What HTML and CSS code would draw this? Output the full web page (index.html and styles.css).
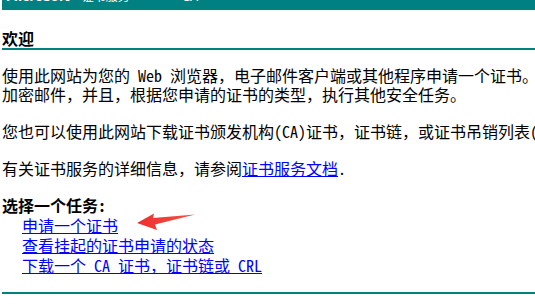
FILE: index.html
```html
<!DOCTYPE html>
<html lang="zh-CN">
<head>
    <meta charset="UTF-8">
    <title>Microsoft 证书服务</title>
    <link rel="stylesheet" href="styles.css">
</head>
<body>
    <div class="banner">
        <div class="banner-text">
            <span class="brand">Microsoft</span><span class="service">证书服务</span><span class="dash">--</span><span class="ca">CA</span>
        </div>
    </div>

    <h1 class="welcome">欢迎</h1>

    <p>使用此网站为您的 Web 浏览器，电子邮件客户端或其他程序申请一个证书。<br>加密邮件，并且，根据您申请的证书的类型，执行其他安全任务。</p>

    <p>您也可以使用此网站下载证书颁发机构(CA)证书，证书链，或证书吊销列表(CRL)，或查看挂起的申请的状态。</p>

    <p>有关证书服务的详细信息，请参阅<a href="#">证书服务文档</a>.</p>

    <div class="tasks">
        <b class="tasks-title">选择一个任务:</b>
        <a href="#">申请一个证书</a>
        <a href="#">查看挂起的证书申请的状态</a>
        <a href="#">下载一个 CA 证书，证书链或 CRL</a>
    </div>

    <div class="rule"></div>

    <!-- 标注箭头 -->
    <svg class="arrow" width="70" height="24" viewBox="130 210 70 24">
        <defs>
            <linearGradient id="red" x1="0" y1="0" x2="1" y2="0">
                <stop offset="0" stop-color="#ee2f2c"/>
                <stop offset="1" stop-color="#f5504a"/>
            </linearGradient>
        </defs>
        <polygon points="137,223 154,213.5 153,218 195,214.5 155,224.5 157,230" fill="url(#red)"/>
    </svg>
</body>
</html>
```

FILE: styles.css
```css
html, body {
    overflow: hidden;
}
body {
    margin: 0 0 0 2px;
    width: 700px;
    font-family: "Noto Sans Mono CJK SC", "Noto Sans CJK SC", sans-serif;
    font-size: 16px;
    line-height: 19px;
    color: #000;
    background: #fff;
}
.banner {
    background-color: #008080;
    height: 10px;
    overflow: hidden;
    padding-left: 4px;
}
.banner-text {
    color: #fff;
    white-space: nowrap;
    font-size: 12px;
    line-height: 12px;
    margin-top: -10px;
}
.brand {
    font-family: "DejaVu Sans", sans-serif;
    font-weight: bold;
    font-size: 12px;
}
.service {
    font-family: "Noto Sans CJK SC", sans-serif;
    margin-left: 12px;
}
.dash {
    margin-left: 18px;
}
.ca {
    font-family: "DejaVu Sans", sans-serif;
    margin-left: 22px;
}
.welcome {
    font-size: 16px;
    line-height: 19px;
    margin: 19px 0 0 0;
    border-bottom: 2px solid #008080;
}
p {
    margin: 18px 0 0 0;
    white-space: nowrap;
}
.welcome + p {
    margin-top: 16px;
}
a {
    color: #0000ff;
}
.tasks {
    margin-top: 18px;
    display: flex;
    flex-direction: column;
    align-items: flex-start;
    line-height: 20px;
}
.tasks-title {
    line-height: 19px;
}
.tasks a {
    margin-left: 20px;
    white-space: nowrap;
}
.rule {
    margin-top: 17px;
    border-top: 2px solid #008080;
}
.arrow {
    position: absolute;
    left: 130px;
    top: 210px;
}
```
